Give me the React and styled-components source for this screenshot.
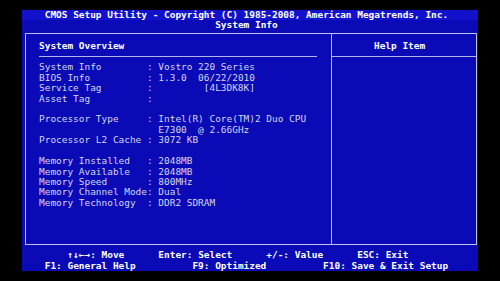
import React from 'react';
import styled, { createGlobalStyle } from 'styled-components';

const ROW = '10.44px';

const info = [
  { label: 'System Info', value: 'Vostro 220 Series' },
  { label: 'BIOS Info', value: '1.3.0  06/22/2010' },
  { label: 'Service Tag', value: '[4L3DK8K]', right: true },
  { label: 'Asset Tag', value: '' },
  null,
  { label: 'Processor Type', value: 'Intel(R) Core(TM)2 Duo CPU' },
  { label: '', value: 'E7300  @ 2.66GHz', noColon: true },
  { label: 'Processor L2 Cache', value: '3072 KB' },
  null,
  { label: 'Memory Installed', value: '2048MB' },
  { label: 'Memory Available', value: '2048MB' },
  { label: 'Memory Speed', value: '800MHz' },
  { label: 'Memory Channel Mode', value: 'Dual' },
  { label: 'Memory Technology', value: 'DDR2 SDRAM' },
];

function App() {
  return (
    <Frame>
      <GlobalStyle />
      <Screen>
        <TitleRow $col={4} $bright>CMOS Setup Utility - Copyright (C) 1985-2008, American Megatrends, Inc.</TitleRow>
        <TitleRow $col={34}>System Info</TitleRow>

        <Panel>
          <MainPane>
            <PaneTitle>System Overview</PaneTitle>
            <Rule $width="49ch" />
            {info.map((row, i) =>
              row === null ? (
                <Blank key={i} />
              ) : (
                <InfoRow key={i}>
                  <span>{row.label}</span>
                  <span>{row.noColon ? '' : ':'}</span>
                  <Value $right={row.right}>{row.value}</Value>
                </InfoRow>
              )
            )}
          </MainPane>
          <HelpPane>
            <HelpTitle>Help Item</HelpTitle>
            <Rule />
          </HelpPane>
        </Panel>

        <Footer>
          <KeyRow $pad={8} $cols="16ch 19ch 16ch auto">
            <span>↑↓←→: Move</span>
            <span>Enter: Select</span>
            <span>+/-: Value</span>
            <span>ESC: Exit</span>
          </KeyRow>
          <KeyRow $pad={4} $cols="26ch 23ch auto">
            <span>F1: General Help</span>
            <span>F9: Optimized</span>
            <span>F10: Save &amp; Exit Setup</span>
          </KeyRow>
        </Footer>
      </Screen>
    </Frame>
  );
}

export default App;

const GlobalStyle = createGlobalStyle`
  html, body {
    margin: 0;
    padding: 0;
    background: #000;
  }
  body {
    width: 500px;
    height: 281px;
    overflow: hidden;
  }
`;

const Frame = styled.div`
  width: 500px;
  height: 281px;
  box-sizing: border-box;
  padding: 10px 0 0 22px;
  background: #000;
`;

const Screen = styled.div`
  width: 456px;
  height: 261px;
  background: #0a0ab6;
  font-family: "DejaVu Sans Mono", "Liberation Mono", monospace;
  font-size: 9.45px;
  line-height: ${ROW};
  color: #d6d6ec;
  white-space: pre;
  display: flex;
  flex-direction: column;
`;

const TitleRow = styled.div`
  height: ${ROW};
  padding-left: ${p => p.$col}ch;
  color: #fff;
  font-weight: bold;
  background: ${p => (p.$bright ? '#1212cc' : 'transparent')};
`;

const Panel = styled.div`
  margin: 2px 1px 0 3px;
  height: 212px;
  box-sizing: border-box;
  border: 1px solid #c2c2ee;
  display: grid;
  grid-template-columns: 306px 1fr;
`;

const MainPane = styled.div`
  border-right: 1px solid #c2c2ee;
  padding: 7.44px 0 0 calc(3ch - 4px);
  display: flex;
  flex-direction: column;
`;

const HelpPane = styled.div`
  padding-top: 7.44px;
  display: flex;
  flex-direction: column;
`;

const PaneTitle = styled.div`
  height: ${ROW};
  color: #fff;
  font-weight: bold;
`;

const HelpTitle = styled(PaneTitle)`
  padding-left: 42px;
`;

const Rule = styled.div`
  width: ${p => p.$width || 'auto'};
  height: 1px;
  margin: 4.72px 0;
  background: #b4b4e6;
`;

const Blank = styled.div`
  height: ${ROW};
`;

const InfoRow = styled.div`
  height: ${ROW};
  display: grid;
  grid-template-columns: 19ch 2ch 17ch;
`;

const Value = styled.span`
  text-align: ${p => (p.$right ? 'right' : 'left')};
`;

const Footer = styled.div`
  margin-top: 5.2px;
  display: flex;
  flex-direction: column;
  color: #fff;
  font-weight: bold;
`;

const KeyRow = styled.div`
  height: ${ROW};
  padding-left: ${p => p.$pad}ch;
  display: grid;
  grid-template-columns: ${p => p.$cols};
`;
